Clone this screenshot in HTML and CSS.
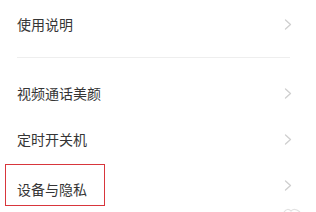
FILE: index.html
```html
<!DOCTYPE html>
<html lang="zh-CN">
<head>
<meta charset="utf-8">
<link rel="stylesheet" href="styles.css">
</head>
<body>
<div class="page">
  <div class="group first">
    <div class="row">
      <span class="label">使用说明</span>
      <svg class="chev" width="8" height="11" viewBox="0 0 8 11"><polyline points="1.5,1 6.5,5.5 1.5,10" fill="none" stroke="#cfcfcf" stroke-width="1.3" stroke-linecap="round" stroke-linejoin="round"/></svg>
    </div>
  </div>
  <div class="divider"></div>
  <div class="group">
    <div class="row">
      <span class="label">视频通话美颜</span>
      <svg class="chev" width="8" height="11" viewBox="0 0 8 11"><polyline points="1.5,1 6.5,5.5 1.5,10" fill="none" stroke="#cfcfcf" stroke-width="1.3" stroke-linecap="round" stroke-linejoin="round"/></svg>
    </div>
    <div class="row">
      <span class="label">定时开关机</span>
      <svg class="chev" width="8" height="11" viewBox="0 0 8 11"><polyline points="1.5,1 6.5,5.5 1.5,10" fill="none" stroke="#cfcfcf" stroke-width="1.3" stroke-linecap="round" stroke-linejoin="round"/></svg>
    </div>
    <div class="row marked">
      <span class="label low">设备与隐私</span>
      <svg class="chev" width="8" height="11" viewBox="0 0 8 11"><polyline points="1.5,1 6.5,5.5 1.5,10" fill="none" stroke="#cfcfcf" stroke-width="1.3" stroke-linecap="round" stroke-linejoin="round"/></svg>
      <div class="highlight"></div>
    </div>
    <div class="row next">
      <span class="label"></span>
      <svg class="peek" width="18" height="4" viewBox="0 0 18 4"><path d="M1 4 Q4.5 -0.5 8 3 Q11.5 -0.5 17 4" fill="none" stroke="#e2e2e2" stroke-width="1.2"/></svg>
    </div>
  </div>
</div>
</body>
</html>
```
FILE: styles.css
```css
html, body {
  margin: 0;
  padding: 0;
  background: #ffffff;
  overflow: hidden;
}
.page {
  width: 316px;
  height: 212px;
  padding-top: 1px;
  box-sizing: border-box;
  overflow: hidden;
  font-family: "Noto Sans CJK SC", "Noto Sans", sans-serif;
  color: #353535;
}
.group {
  display: flex;
  flex-direction: column;
}
.row {
  position: relative;
  height: 46px;
  display: flex;
  align-items: center;
  justify-content: space-between;
  padding: 0 24px 0 17px;
}
.label {
  font-size: 14px;
  line-height: 20px;
  letter-spacing: 0;
}
.low {
  padding-top: 7px;
}
.chev {
  display: block;
}
.divider {
  height: 1px;
  background: #eeeeee;
  margin: 10px 26px 12px 17px;
}
.highlight {
  position: absolute;
  left: 5px;
  top: 2px;
  width: 100px;
  height: 42px;
  box-sizing: border-box;
  border: 1px solid #d8363c;
  pointer-events: none;
}
.row.next {
  height: 4px;
  align-items: flex-start;
  padding-right: 15px;
}
.peek {
  display: block;
}
```
